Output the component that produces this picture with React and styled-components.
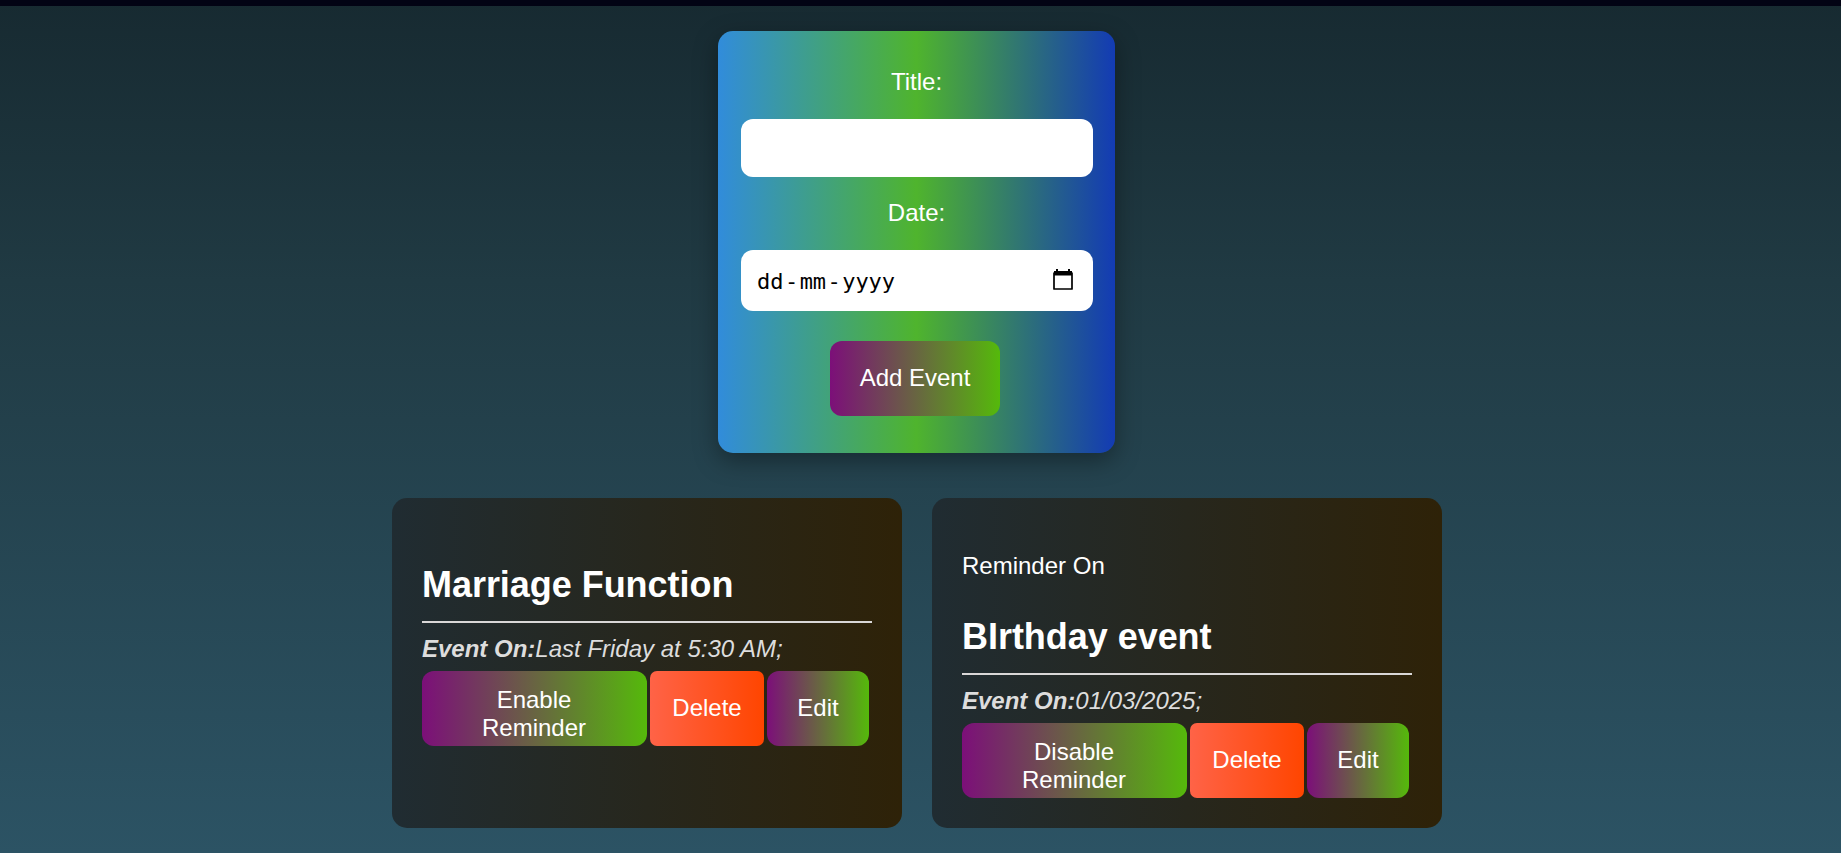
import React from "react";
import styled, { createGlobalStyle, css } from "styled-components";

const GlobalStyle = createGlobalStyle`
  *, *::before, *::after { box-sizing: border-box; }
  body {
    margin: 0;
    height: 853px;
    overflow: hidden;
    font: 24px/27px "Liberation Sans", Arial, sans-serif;
    color: #fff;
  }
`;

const Page = styled.div`
  height: 853px;
  border-top: 6px solid #020314;
  background: linear-gradient(180deg, #172a31 0%, #203a43 33%, #2c5364 100%) border-box;
  display: flex;
  flex-direction: column;
  align-items: center;
`;

const Form = styled.form`
  display: flex;
  flex-direction: column;
  align-items: center;
  width: 397px;
  height: 422px;
  margin: 25px 8px 0 0;
  padding: 37px 22px 0 23px;
  border-radius: 15px;
  background: linear-gradient(90deg, #318cdb 0%, #4fb42d 50%, #133bb4 100%);
  box-shadow: 0 8px 24px rgba(0, 0, 0, 0.35);
`;

const Label = styled.label`
  height: 27px;
  margin-right: 1px;
`;

const field = css`
  width: 100%;
  border: 0;
  border-radius: 12px;
  background: #fff;
  color: #000;
`;

const TextInput = styled.input`
  ${field}
  height: 58px;
  margin: 24px 0 22px;
  padding: 15px;
  outline: 0;
`;

const DateField = styled.div`
  ${field}
  display: flex;
  align-items: center;
  justify-content: space-between;
  height: 61px;
  margin-top: 24px;
  padding: 0 20px 0 16px;
`;

const DateText = styled.span`
  display: flex;
  gap: 1.6px;
  padding-top: 2px;
  font: 22px/30px "DejaVu Sans Mono", monospace;
  letter-spacing: -0.1px;
`;

const CalendarIcon = styled.svg`
  width: 20px;
  height: 21px;
  margin-bottom: 2px;
`;

const Button = styled.button`
  width: ${(p) => p.$width}px;
  height: 75px;
  padding: 0 0 2px;
  border: 0;
  border-radius: 12px;
  background: linear-gradient(90deg, #7c0f79, #55b90b);
  color: #fff;
  font: inherit;
`;

const AddButton = styled(Button)`
  margin: 30px 4px 0 0;
`;

const ReminderButton = styled(Button)`
  padding: 10px 51px 0 50px;
  line-height: 28px;
`;

const DeleteButton = styled(Button)`
  border-radius: 7px;
  background: linear-gradient(90deg, #ff6347, #ff4500);
`;

const Events = styled.main`
  display: flex;
  gap: 30px;
  margin: 45px 7px 0 0;
`;

const Card = styled.article`
  width: 510px;
  height: 330px;
  padding: 54px 30px 0;
  border-radius: 15px;
  background: linear-gradient(90deg, #202c32, #2e2208);
`;

const Status = styled.p`
  height: 28px;
  margin: 0 0 24px;
`;

const Title = styled.h2`
  height: 71px;
  margin: 0 0 7px;
  padding-top: 12px;
  border-bottom: 2px solid #d9d7d7;
  font-size: 36px;
  line-height: 41px;
  letter-spacing: -0.04px;
`;

const When = styled.p`
  height: 41px;
  margin: 0;
  padding-top: 5px;
  color: #ddd;
  font-style: italic;
`;

const Actions = styled.div`
  display: flex;
  gap: 3px;
`;

const events = [
  { title: "Marriage Function", when: "Last Friday at 5:30 AM", reminder: false },
  { title: "BIrthday event", when: "01/03/2025", reminder: true },
];

function EventCard({ title, when, reminder }) {
  return (
    <Card>
      {reminder && <Status>Reminder On</Status>}
      <Title>{title}</Title>
      <When><b>Event On:</b>{when};</When>
      <Actions>
        <ReminderButton $width={225}>{reminder ? "Disable" : "Enable"} Reminder</ReminderButton>
        <DeleteButton $width={114}>Delete</DeleteButton>
        <Button $width={102}>Edit</Button>
      </Actions>
    </Card>
  );
}

export default function App() {
  return (
    <>
      <GlobalStyle />
      <Page>
        <Form>
          <Label htmlFor="title">Title:</Label>
          <TextInput id="title" />
          <Label>Date:</Label>
          <DateField>
            <DateText>
              <span>dd</span><span>-</span><span>mm</span><span>-</span><span>yyyy</span>
            </DateText>
            <CalendarIcon viewBox="0 0 20 21">
              <path d="M1 4h18v16H1z" fill="none" stroke="#000" strokeWidth="1.7" strokeLinejoin="round" />
              <path d="M1 2h18v4.5H1zM3 0h2v3H3zM15 0h2v3h-2z" />
            </CalendarIcon>
          </DateField>
          <AddButton type="button" $width={170}>Add Event</AddButton>
        </Form>
        <Events>
          {events.map((event) => <EventCard key={event.title} {...event} />)}
        </Events>
      </Page>
    </>
  );
}
